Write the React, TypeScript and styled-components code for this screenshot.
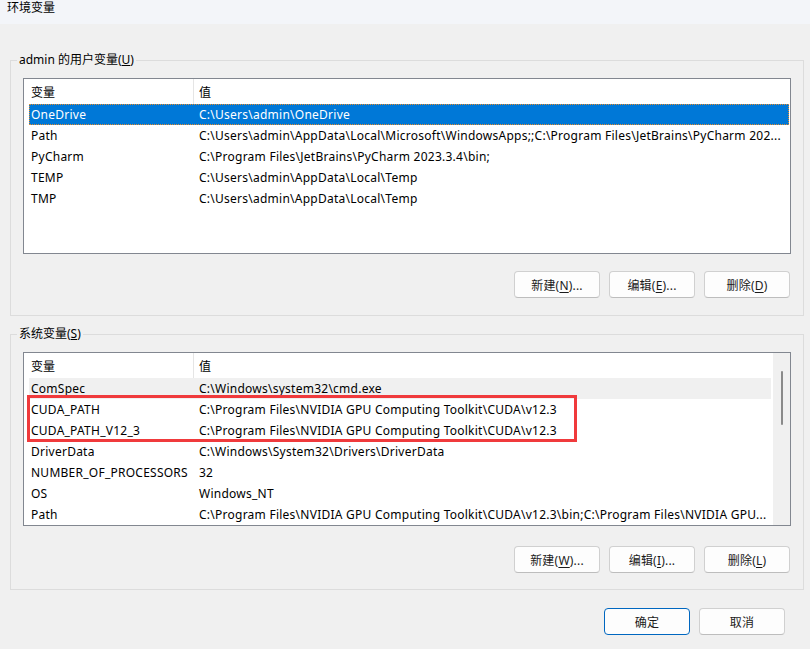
import styled, { createGlobalStyle } from "styled-components";

const GlobalStyle = createGlobalStyle`
  html, body {
    margin: 0;
    padding: 0;
    background: #f0f0f0;
  }
  body {
    font-family: "Noto Sans", "Noto Sans CJK SC", sans-serif;
    font-size: 12px;
    color: #000;
  }
`

const Window = styled.div`
  width: 810px;
  height: 649px;
  background: #f0f0f0;
  display: flex;
  flex-direction: column;
  overflow: hidden;
`

const TitleBar = styled.div`
  height: 24px;
  flex: none;
  box-sizing: border-box;
  padding-left: 7px;
  line-height: 16px;
  background: #f3f5f9;
`

const Content = styled.div`
  display: flex;
  flex-direction: column;
  padding: 0 6px 0 10px;
`

const Group = styled.fieldset<{ $top: number; $bottom: number }>`
  margin: ${p => p.$top}px 0 0 0;
  border: 1px solid #dcdcdc;
  padding: 10px 12px ${p => p.$bottom}px 12px;
  min-width: 0;
  display: flex;
  flex-direction: column;
`

const Legend = styled.legend`
  padding: 0 2px;
  margin-left: -6px;
  line-height: 16px;
`

const ListBox = styled.div<{ $height: number }>`
  height: ${p => p.$height}px;
  box-sizing: border-box;
  border: 1px solid #828790;
  background: #fff;
  display: flex;
  overflow: hidden;
`

const ListBody = styled.div`
  flex: 1;
  min-width: 0;
  position: relative;
  display: flex;
  flex-direction: column;
`

const Header = styled.div`
  height: 25px;
  flex: none;
  display: grid;
  grid-template-columns: 170px 1fr;
  align-items: stretch;
`

const HeaderCell = styled.div<{ $first?: boolean }>`
  display: flex;
  align-items: center;
  padding-left: ${p => (p.$first ? 7 : 5)}px;
  border-right: 1px solid ${p => (p.$first ? "#e5e5e5" : "transparent")};
`

const Row = styled.div<{ $state?: "active" | "inactive" }>`
  height: 21px;
  flex: none;
  margin: 0 1px 0 5px;
  box-sizing: border-box;
  display: grid;
  grid-template-columns: 165px 1fr;
  align-items: center;
  white-space: nowrap;
  letter-spacing: 0.25px;
  background: ${p =>
    p.$state === "active" ? "#0078d7" : p.$state === "inactive" ? "#f0f0f0" : "transparent"};
  color: ${p => (p.$state === "active" ? "#fff" : "#000")};
  outline: ${p => (p.$state === "active" ? "1px dotted #e38b2c" : "none")};
  outline-offset: -1px;
`

const Name = styled.span`
  padding-left: 2px;
  overflow: hidden;
`

const Value = styled.span`
  padding-left: 5px;
  overflow: hidden;
  text-overflow: ellipsis;
`

const Highlight = styled.div`
  position: absolute;
  left: 3px;
  top: 42px;
  width: 550px;
  height: 47px;
  box-sizing: border-box;
  border: 3px solid #f03a3c;
  pointer-events: none;
`

const ScrollTrack = styled.div`
  width: 18px;
  flex: none;
  background: #f0f0f0;
  border-left: 1px solid #fff;
  display: flex;
  justify-content: center;
  padding-top: 18px;
  box-sizing: border-box;
`

const ScrollThumb = styled.div`
  width: 2px;
  height: 54px;
  border-radius: 1px;
  background: #8a8a8a;
`

const ButtonRow = styled.div<{ $top: number }>`
  display: flex;
  justify-content: flex-end;
  gap: 9px;
  padding-right: 1px;
  margin-top: ${p => p.$top}px;
`

const Button = styled.button<{ $primary?: boolean }>`
  width: 86px;
  height: 27px;
  box-sizing: border-box;
  padding: 0;
  border-radius: 4px;
  background: #fdfdfd;
  border: 1px solid ${p => (p.$primary ? "#0067c0" : "#d0d0d0")};
  border-bottom-color: ${p => (p.$primary ? "#0067c0" : "#bdbdbd")};
  font: inherit;
  letter-spacing: 0.2px;
  color: #1b1b1b;

  u {
    text-decoration-thickness: 1px;
    text-underline-offset: 2px;
  }
`

const Footer = styled.div`
  display: flex;
  justify-content: flex-end;
  gap: 9px;
  padding: 18px 25px 0 0;
`

interface Variable {
  name: string
  value: string
  state?: "active" | "inactive"
}

const userVars: Variable[] = [
  { name: "OneDrive", value: "C:\\Users\\admin\\OneDrive", state: "active" },
  {
    name: "Path",
    value:
      "C:\\Users\\admin\\AppData\\Local\\Microsoft\\WindowsApps;;C:\\Program Files\\JetBrains\\PyCharm 202...",
  },
  { name: "PyCharm", value: "C:\\Program Files\\JetBrains\\PyCharm 2023.3.4\\bin;" },
  { name: "TEMP", value: "C:\\Users\\admin\\AppData\\Local\\Temp" },
  { name: "TMP", value: "C:\\Users\\admin\\AppData\\Local\\Temp" },
]

const systemVars: Variable[] = [
  { name: "ComSpec", value: "C:\\Windows\\system32\\cmd.exe", state: "inactive" },
  { name: "CUDA_PATH", value: "C:\\Program Files\\NVIDIA GPU Computing Toolkit\\CUDA\\v12.3" },
  { name: "CUDA_PATH_V12_3", value: "C:\\Program Files\\NVIDIA GPU Computing Toolkit\\CUDA\\v12.3" },
  { name: "DriverData", value: "C:\\Windows\\System32\\Drivers\\DriverData" },
  { name: "NUMBER_OF_PROCESSORS", value: "32" },
  { name: "OS", value: "Windows_NT" },
  {
    name: "Path",
    value:
      "C:\\Program Files\\NVIDIA GPU Computing Toolkit\\CUDA\\v12.3\\bin;C:\\Program Files\\NVIDIA GPU...",
  },
]

const VarRows = ({ vars }: { vars: Variable[] }) => (
  <>
    <Header>
      <HeaderCell $first>变量</HeaderCell>
      <HeaderCell>值</HeaderCell>
    </Header>
    {vars.map(v => (
      <Row key={v.name} $state={v.state}>
        <Name>{v.name}</Name>
        <Value>{v.value}</Value>
      </Row>
    ))}
  </>
)

const App = () => {
  return (
    <Window>
      <GlobalStyle />
      <TitleBar>环境变量</TitleBar>
      <Content>
        <Group $top={28} $bottom={17}>
          <Legend>
            admin 的用户变量(<u>U</u>)
          </Legend>
          <ListBox $height={176}>
            <ListBody>
              <VarRows vars={userVars} />
            </ListBody>
          </ListBox>
          <ButtonRow $top={17}>
            <Button>
              新建(<u>N</u>)...
            </Button>
            <Button>
              编辑(<u>E</u>)...
            </Button>
            <Button>
              删除(<u>D</u>)
            </Button>
          </ButtonRow>
        </Group>

        <Group $top={10} $bottom={16}>
          <Legend>
            系统变量(<u>S</u>)
          </Legend>
          <ListBox $height={174}>
            <ListBody>
              <VarRows vars={systemVars} />
              <Highlight />
            </ListBody>
            <ScrollTrack>
              <ScrollThumb />
            </ScrollTrack>
          </ListBox>
          <ButtonRow $top={20}>
            <Button>
              新建(<u>W</u>)...
            </Button>
            <Button>
              编辑(<u>I</u>)...
            </Button>
            <Button>
              删除(<u>L</u>)
            </Button>
          </ButtonRow>
        </Group>
      </Content>
      <Footer>
        <Button $primary>确定</Button>
        <Button>取消</Button>
      </Footer>
    </Window>
  )
}

export default App
